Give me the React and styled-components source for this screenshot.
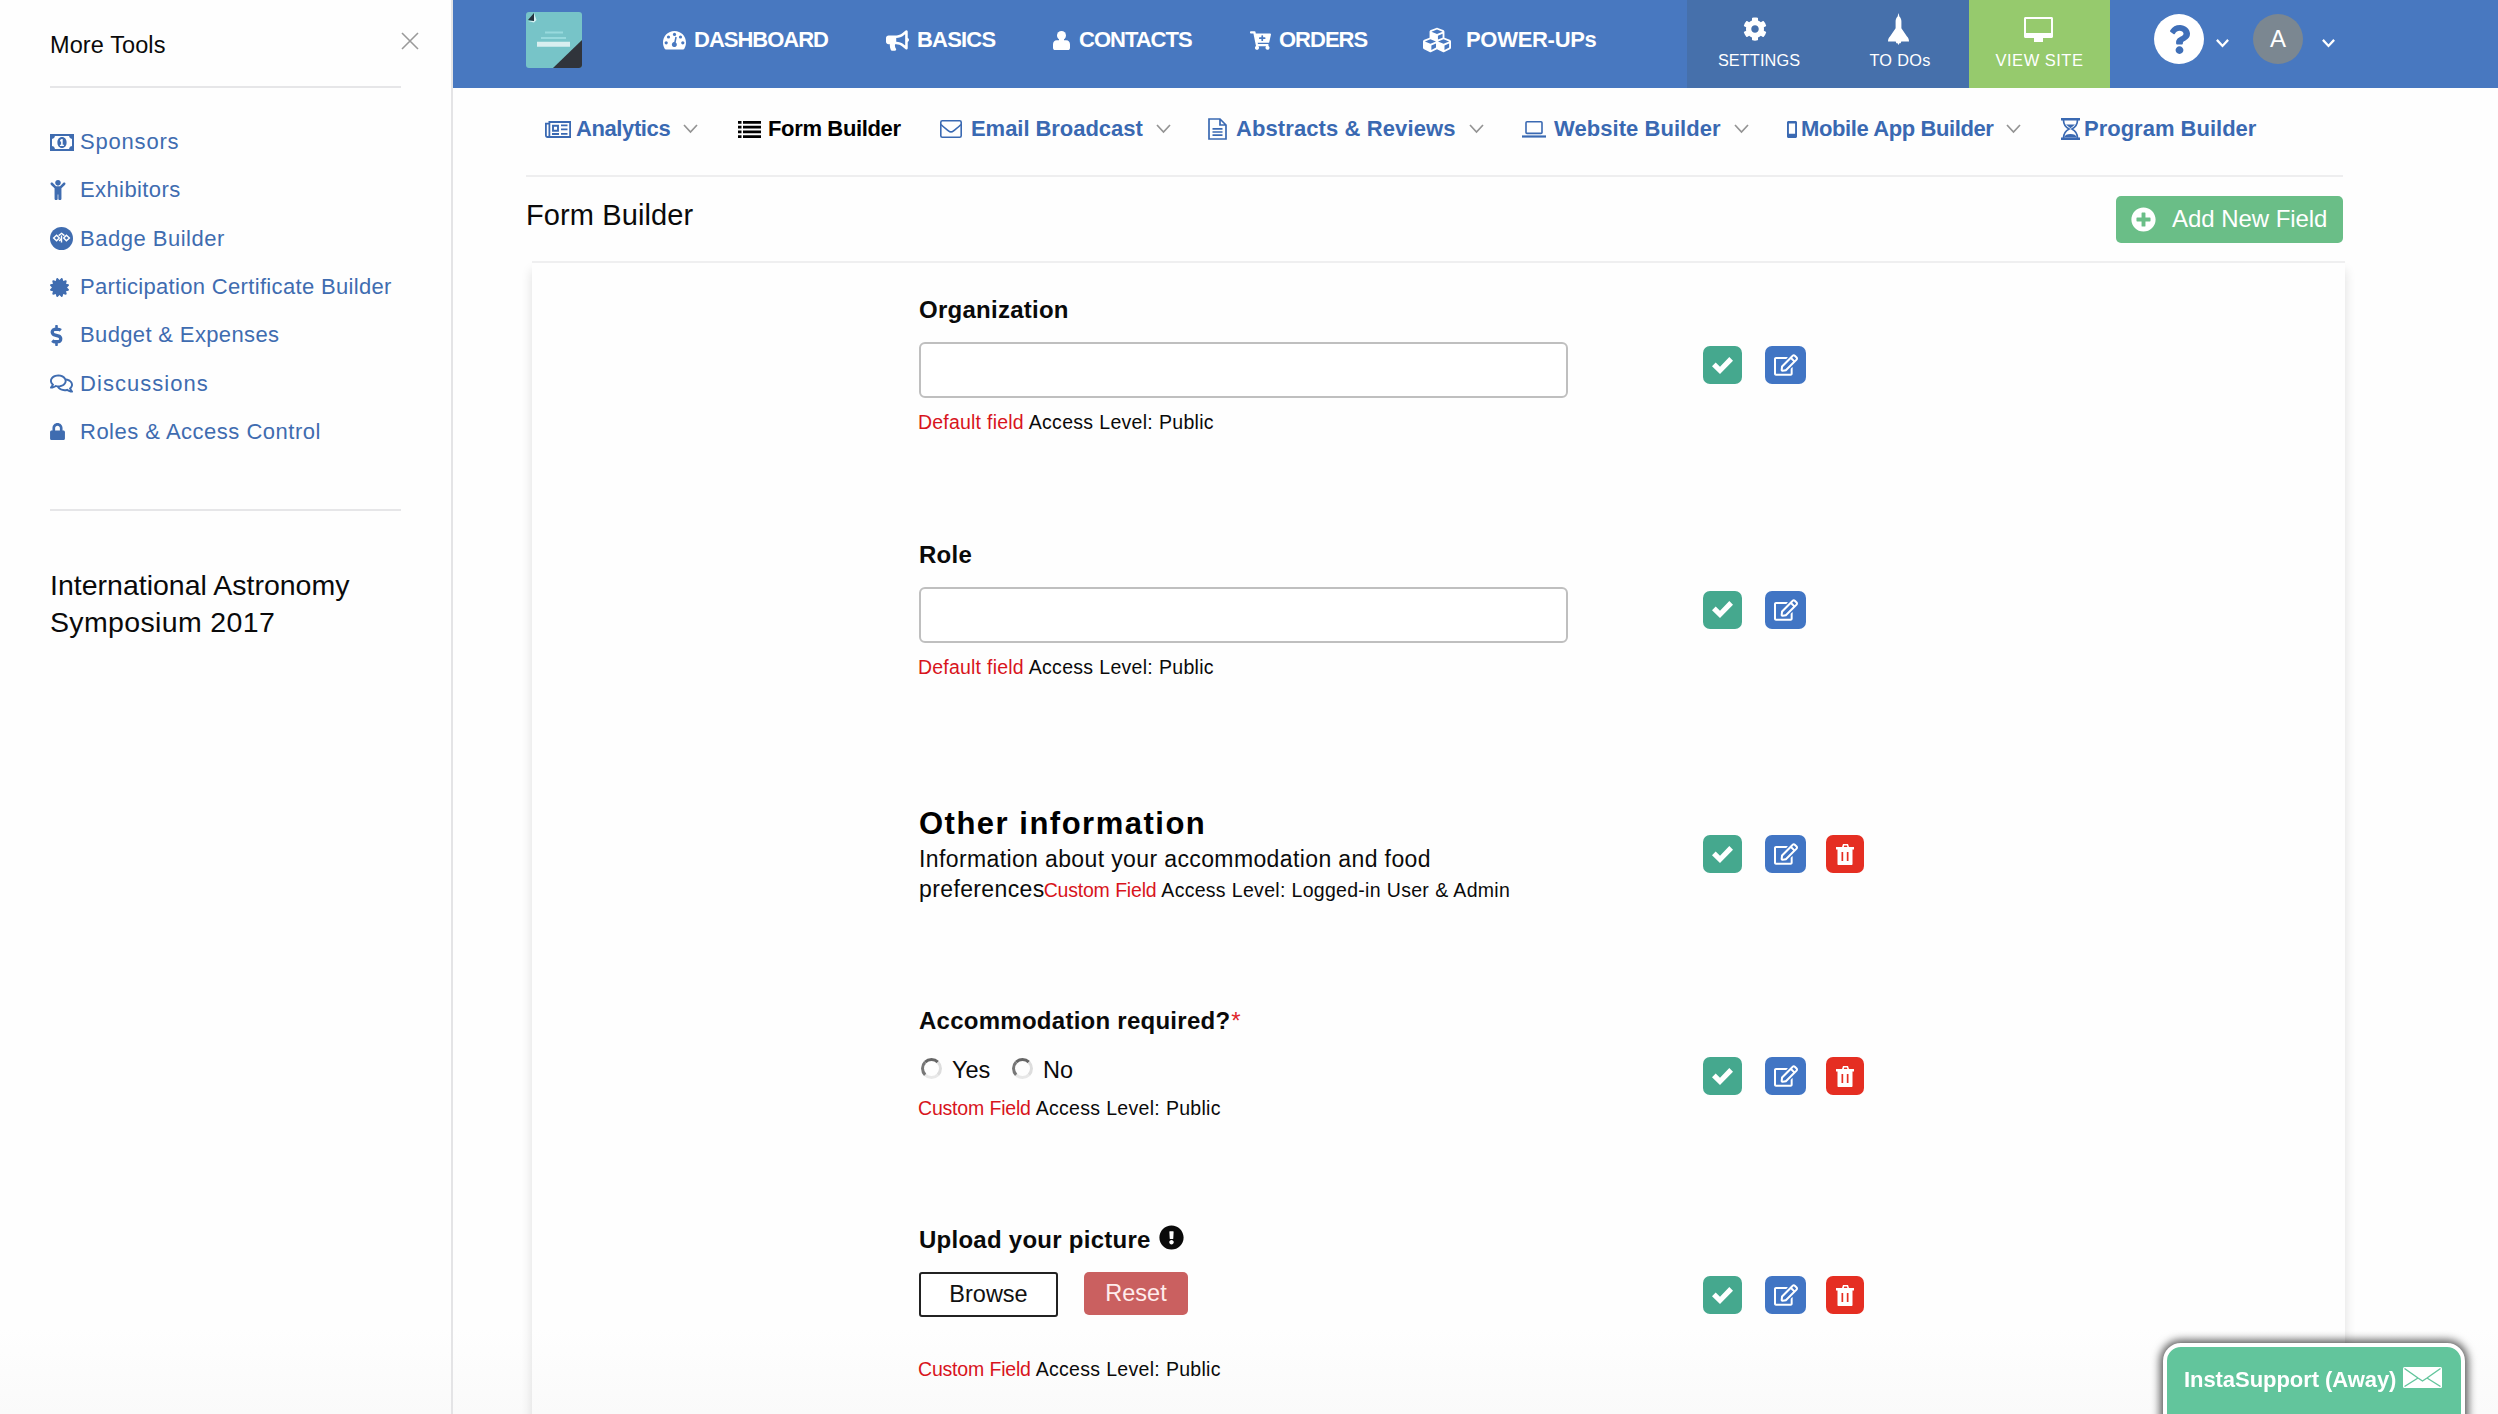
import React from 'react';
import styled, { createGlobalStyle } from 'styled-components';
import {
  FaChild, FaCertificate, FaDollarSign, FaRegComments, FaLock, FaBullhorn, FaCartPlus, FaCubes,
  FaCog, FaQuestion, FaPlusCircle, FaRegEdit, FaExclamationCircle,
} from 'react-icons/fa';

const MoneyIcon = () => (
  <svg width="24" height="17" viewBox="0 0 24 17" fill="currentColor">
    <path fillRule="evenodd" d="M0 0h24v17H0zM5 2Q4.600 4.800 2 5v7q2.600.2 3 3h14q.4-2.800 3-3V5q-2.600-.2-3-3z" />
    <path fillRule="evenodd" d="M12 3c2.900 0 4.600 2.400 4.600 5.500S14.900 14 12 14s-4.600-2.400-4.600-5.500S9.100 3 12 3zm-1.900 3.100v1.300h1v3.300h-1.200V12h4v-1.300h-1.200V5h-1.200z" />
  </svg>
);

const BadgeIcon = () => (
  <svg width="23" height="23" viewBox="0 0 23 23">
    <circle cx="11.500" cy="11.500" r="11.500" fill="currentColor" />
    <path d="M3.600 11l3-2.700 2.700 2.700-2.700 2.700zM8.700 8.600l2.900-2.300 2.800 2.300M19.400 11l-3-2.700-2.700 2.700 2.700 2.700zM11.500 8.500v7M9.200 14l2.300-2.500" fill="none" stroke="#fff" strokeWidth="1.400" />
  </svg>
);

const GaugeIcon = () => (
  <svg width="23" height="19" viewBox="0 0 23 19">
    <path fill="currentColor" d="M11.500 0C17.900 0 23 5.100 23 11.500c0 2.300-.6 4.400-1.700 6.200-.3.500-.7.700-1.200.7H2.900c-.5 0-.9-.2-1.200-.7C.6 15.900 0 13.800 0 11.500 0 5.100 5.100 0 11.500 0z" />
    <g fill="#4878c0">
      <circle cx="11.500" cy="3.400" r="1.600" />
      <circle cx="5.500" cy="6" r="1.600" />
      <circle cx="17.500" cy="6" r="1.600" />
      <circle cx="3.200" cy="11.800" r="1.600" />
      <circle cx="19.800" cy="11.800" r="1.600" />
      <path d="M12.300 5.800l1.500.4-1.100 5.300a2.500 2.500 0 1 1-1.500-.4z" />
    </g>
  </svg>
);

const PersonIcon = () => (
  <svg width="17" height="19" viewBox="0 0 17 19" fill="currentColor">
    <circle cx="8.500" cy="4.500" r="4.500" />
    <path d="M6 7h5v2.200h2.200c2.400 0 3.800 1.700 3.800 4.300v3.200c0 1.500-.8 2.300-2.200 2.300H2.200C.8 19 0 18.200 0 16.700v-3.200c0-2.600 1.400-4.300 3.800-4.300H6z" />
  </svg>
);

const ShuttleIcon = () => (
  <svg width="21" height="32" viewBox="0 0 21 32" fill="currentColor">
    <path d="M10.500 0l.9 3.500c1.300 1.400 2 3 2 5v6.800l5.600 8.200c1.400 1.400 2 3 2 5h-7.700l-.7 1.800h-1.200L10.500 32l-.9-1.700H8.400l-.7-1.800H0c0-2 .6-3.600 2-5l5.600-8.200V8.500c0-2 .7-3.600 2-5z" />
  </svg>
);

const NewsIcon = () => (
  <svg width="26" height="17" viewBox="0 0 26 17" fill="none" stroke="currentColor" strokeWidth="1.800">
    <path d="M4.400 1h20.700v15H2.500c-1 0-1.600-.7-1.600-1.700V2.600h3.500zM4.400 2.600v11.800c0 1-.8 1.600-1.600 1.600" />
    <path d="M8 4.800h5v5H8zM7 13h7M16 4.400h6.500M16 8.400h6.500M16 12.900h6.500" strokeWidth="1.900" />
  </svg>
);

const ListIcon = () => (
  <svg width="23" height="17" viewBox="0 0 23 17" fill="currentColor">
    <path d="M0 0h3.500v2.800H0zM0 4.700h3.500v2.800H0zM0 9.500h3.500v2.800H0zM0 14.200h3.500V17H0zM5 0h18v2.800H5zM5 4.700h18v2.800H5zM5 9.500h18v2.800H5zM5 14.200h18V17H5z" />
  </svg>
);

const EnvelopeIcon = () => (
  <svg width="22" height="18" viewBox="0 0 22 18" fill="none" stroke="currentColor" strokeWidth="1.600">
    <rect x=".8" y=".8" width="20.400" height="16.400" rx="1.500" />
    <path d="M1 4.500c2.500 2.600 5 4.200 7.500 6.300 1.600 1.400 3.400 1.400 5 0 2.500-2.100 5-3.700 7.500-6.300" />
  </svg>
);

const FileIcon = () => (
  <svg width="19" height="22" viewBox="0 0 19 22" fill="none" stroke="currentColor" strokeWidth="1.700">
    <path d="M1 1h11l6 6v14H1zM12 1v6h6" />
    <path d="M4.500 10.800h10M4.500 14h10M4.500 17.200h10" />
  </svg>
);

const LaptopIcon = () => (
  <svg width="24" height="17" viewBox="0 0 24 17" fill="none" stroke="currentColor" strokeWidth="1.600">
    <rect x="4" y=".8" width="16" height="11.600" rx="1" />
    <path d="M0 15.500h24" strokeWidth="2.200" />
  </svg>
);

const MobileIcon = () => (
  <svg width="10" height="17" viewBox="0 0 10 17" fill="currentColor">
    <path fillRule="evenodd" d="M1.500 0h7C9.400 0 10 .6 10 1.500v14c0 .9-.6 1.500-1.500 1.500h-7C.6 17 0 16.400 0 15.500v-14C0 .6.6 0 1.500 0zm.4 2.400v10.300h6.200V2.400z" />
  </svg>
);

const HourglassIcon = () => (
  <svg width="19" height="22" viewBox="0 0 19 22" fill="none" stroke="currentColor" strokeWidth="1.700">
    <path d="M0 1.200h19M0 20.800h19" strokeWidth="2.400" />
    <path d="M2.500 2c0 5 2 7 5.500 9-3.500 2-5.500 4-5.500 9M16.500 2c0 5-2 7-5.500 9 3.500 2 5.500 4 5.500 9" />
    <path d="M5 6.500h9l-4.500 3.800zM3 19.500c1-2.500 3-3.500 6.500-3.500s5.500 1 6.500 3.500z" fill="currentColor" stroke="none" />
  </svg>
);

const MonitorIcon = () => (
  <svg width="29" height="25" viewBox="0 0 29 25" fill="currentColor">
    <path fillRule="evenodd" d="M1.500 0h26c.9 0 1.500.6 1.500 1.500v18c0 .9-.6 1.500-1.500 1.500H19v4h-9v-4H1.500C.6 21 0 20.400 0 19.500v-18C0 .6.6 0 1.500 0zM2 2v14h25V2z" />
  </svg>
);

const CheckIcon = () => (
  <svg width="21" height="17" viewBox="0 0 21 17" fill="currentColor">
    <path d="M8 17L0 9.200l3.700-3.700L8 9.700 17.300 0 21 3.700z" />
  </svg>
);

const TrashIcon = () => (
  <svg width="18" height="21" viewBox="0 0 18 21" fill="currentColor">
    <path fillRule="evenodd" d="M6 3l1-3h5l1 3h5v2.500h-1.500V20c0 .6-.4 1-1 1h-13c-.6 0-1-.4-1-1V5.500H0V3zm1.800 0h3.600l-.5-1.500H8.200zM5.500 8v9H7.200V8zm5.300 0v9h1.700V8z" />
  </svg>
);

const MailIcon = () => (
  <svg width="39" height="21" viewBox="0 0 39 21">
    <rect width="39" height="21" rx="1.500" fill="#fff" />
    <path d="M1.500 1.500l13.500 9.500 4.500 3 4.500-3L37.500 1.500M1.500 19.500L15 11M37.500 19.500L24 11" fill="none" stroke="#62c59c" strokeWidth="1.400" />
  </svg>
);

const ChevronIcon = ({ size = 15, weight = 1.7 }) => (
  <svg width={size} height={size * 0.62} viewBox="0 0 15 9.300" fill="none" stroke="currentColor" strokeWidth={weight}>
    <path d="M1 1l6.500 7L14 1" />
  </svg>
);

const CloseIcon = () => (
  <svg width="18" height="18" viewBox="0 0 18 18" fill="none" stroke="currentColor" strokeWidth="1.600">
    <path d="M1 1l16 16M17 1L1 17" />
  </svg>
);

const LogoIcon = () => (
  <svg width="56" height="56" viewBox="0 0 56 56">
    <rect width="56" height="56" rx="3" fill="#77c4c8" />
    <path d="M56 28v25a3 3 0 0 1-3 3H27z" fill="#30343b" />
    <path d="M2 8l6-7v8z" fill="#26323f" />
    <path d="M8 1v8H2l6 1.500L10.500 8z" fill="#d4f0f2" />
    <path d="M19 20.500h18M15 26h25" stroke="#98dadd" strokeWidth="2" />
    <path d="M11 32.300h33" stroke="#d9eff0" strokeWidth="5" />
  </svg>
);

const tools = [
  { name: 'Sponsors', icon: <MoneyIcon />, track: 0.8 },
  { name: 'Exhibitors', icon: <FaChild size={20} />, track: 0.4, pull: 2 },
  { name: 'Badge Builder', icon: <BadgeIcon />, track: 0.5 },
  { name: 'Participation Certificate Builder', icon: <FaCertificate size={19} />, track: 0.33 },
  { name: 'Budget & Expenses', icon: <FaDollarSign size={21} />, track: 0.36, pull: 4 },
  { name: 'Discussions', icon: <FaRegComments size={23} />, track: 1.05 },
  { name: 'Roles & Access Control', icon: <FaLock size={17} />, track: 0.5, pull: 1 },
];

const mainNav = [
  { name: 'DASHBOARD', icon: <GaugeIcon />, slot: 31, width: 223, track: -1 },
  { name: 'BASICS', icon: <FaBullhorn size={23} />, slot: 31, width: 167, track: -0.8 },
  { name: 'CONTACTS', icon: <PersonIcon />, slot: 26, width: 197, track: -1 },
  { name: 'ORDERS', icon: <FaCartPlus size={21} />, slot: 29, width: 173, track: -1 },
  { name: 'POWER-UPs', icon: <FaCubes size={28} />, slot: 43, width: 264, track: -0.3 },
];

const subNav = [
  { name: 'Analytics', icon: <NewsIcon />, slot: 31, width: 193, track: -0.4, menu: true },
  { name: 'Form Builder', icon: <ListIcon />, slot: 30, width: 202, track: -0.35, active: true },
  { name: 'Email Broadcast', icon: <EnvelopeIcon />, slot: 31, width: 268, track: -0.05, menu: true },
  { name: 'Abstracts & Reviews', icon: <FileIcon />, slot: 28, width: 314, track: 0.1, menu: true },
  { name: 'Website Builder', icon: <LaptopIcon />, slot: 32, width: 265, track: 0.05, menu: true },
  { name: 'Mobile App Builder', icon: <MobileIcon />, slot: 14, width: 274, track: -0.4, menu: true },
  { name: 'Program Builder', icon: <HourglassIcon />, slot: 23, width: 200, track: 0 },
];

const Access = ({ custom, level = 'Public', top }) => (
  <Help $top={top}>
    <Kind $custom={custom}>{custom ? 'Custom Field' : 'Default field'}</Kind> Access Level: {level}
  </Help>
);

const FieldRow = ({ height, removable, children }) => (
  <Row $height={height}>
    <Field>{children}</Field>
    <Actions>
      <Action $width="39px" $color="#45a88e"><CheckIcon /></Action>
      <Action $width="41px" $color="#4175c4"><FaRegEdit size={24} /></Action>
      {removable && <Action $width="38px" $color="#e52e22"><TrashIcon /></Action>}
    </Actions>
  </Row>
);

function App() {
  return (
    <Page>
      <GlobalStyle />
      <Sidebar>
        <SideHead>
          More Tools
          <Close><CloseIcon /></Close>
        </SideHead>
        <ToolList>
          {tools.map((tool) => (
            <Tool key={tool.name} $track={tool.track}>
              <Slot $width={30} $pull={tool.pull}>{tool.icon}</Slot>
              {tool.name}
            </Tool>
          ))}
        </ToolList>
        <EventName>International Astronomy<br /><EventYear>Symposium 2017</EventYear></EventName>
      </Sidebar>

      <Main>
        <Header>
          <Logo><LogoIcon /></Logo>
          <Nav>
            {mainNav.map((item) => (
              <NavItem key={item.name} $width={item.width} $track={item.track}>
                <Slot $width={item.slot}>{item.icon}</Slot>
                {item.name}
              </NavItem>
            ))}
          </Nav>
          <Tile $width={138} $track={0.1}>
            <TileIcon $shift={-8}><FaCog size={24} /></TileIcon>
            SETTINGS
          </Tile>
          <Tile $width={144} $track={0.3}>
            <TileIcon $shift={-4}><ShuttleIcon /></TileIcon>
            TO DOs
          </Tile>
          <Tile $width={141} $track={0.5} $green>
            <TileIcon $shift={-3}><MonitorIcon /></TileIcon>
            VIEW SITE
          </Tile>
          <Account>
            <Round><FaQuestion size={29} /></Round>
            <Caret $left={12}><ChevronIcon size={13} weight={2.6} /></Caret>
            <Round $user>A</Round>
            <Caret $left={19}><ChevronIcon size={13} weight={2.6} /></Caret>
          </Account>
        </Header>

        <Content>
          <SubNav>
            {subNav.map((item) => (
              <SubItem key={item.name} $width={item.width} $track={item.track} $active={item.active}>
                <Slot $width={item.slot}>{item.icon}</Slot>
                {item.name}
                {item.menu && <SubCaret><ChevronIcon /></SubCaret>}
              </SubItem>
            ))}
          </SubNav>
          <TitleBar>
            <Title>Form Builder</Title>
            <AddButton><FaPlusCircle size={25} />Add New Field</AddButton>
          </TitleBar>

          <Panel>
            <FieldRow height={244.7}>
              <Label>Organization</Label>
              <Input />
              <Access top={11} />
            </FieldRow>
            <FieldRow height={244.7}>
              <Label>Role</Label>
              <Input />
              <Access top={11} />
            </FieldRow>
            <FieldRow height={222} removable>
              <Section>Other information</Section>
              <Info>
                Information about your accommodation and food<br />
                preferences<Access custom level="Logged-in User & Admin" />
              </Info>
            </FieldRow>
            <FieldRow height={219} removable>
              <Label>Accommodation required?<Star>*</Star></Label>
              <Options>
                <Option><Radio />Yes</Option>
                <Option><Radio />No</Option>
              </Options>
              <Access custom top={10} />
            </FieldRow>
            <FieldRow height={220} removable>
              <Label>Upload your picture<FaExclamationCircle size={25} /></Label>
              <Uploads>
                <Browse>Browse</Browse>
                <Reset>Reset</Reset>
              </Uploads>
              <Access custom top={39} />
            </FieldRow>
          </Panel>
        </Content>
      </Main>
      <Support>InstaSupport (Away) <MailIcon /></Support>
    </Page>
  );
}

const GlobalStyle = createGlobalStyle`
  * {
    box-sizing: border-box;
  }
  body {
    margin: 0;
    background: #fefefe;
    color: #0a0a0a;
    font-family: "Liberation Sans", Arial, sans-serif;
    overflow: hidden;
  }
  svg {
    display: block;
    flex: none;
  }
`

const Page = styled.div`
  display: flex;
  height: 1414px;
  overflow: hidden;
  background: linear-gradient(#fefefe 94%, #fafafa);
`

const Sidebar = styled.aside`
  width: 453px;
  flex: none;
  padding: 0 50px;
  border-right: 2px solid #e4e4e6;
`

const SideHead = styled.div`
  display: flex;
  justify-content: space-between;
  height: 88px;
  padding-top: 30px;
  line-height: 30px;
  border-bottom: 2px solid #e6e6e8;
  font-size: 23.500px;
  letter-spacing: 0.100px;
  white-space: nowrap;
`

const Close = styled.span`
  color: #9a9a9a;
  margin: 2px -18px 0 0;
`

const ToolList = styled.nav`
  height: 423px;
  padding-top: 30px;
  border-bottom: 2px solid #e6e6e8;
`

const Tool = styled.a`
  display: flex;
  align-items: center;
  height: 48.300px;
  color: #3f6cb0;
  font-size: 22px;
  letter-spacing: ${props => props.$track}px;
  white-space: nowrap;
`

const Slot = styled.span`
  width: ${props => props.$width + (props.$pull || 0)}px;
  margin-left: -${props => props.$pull || 0}px;
  flex: none;
`

const EventName = styled.h2`
  margin: 56px 0 0;
  font-size: 28.500px;
  line-height: 37px;
  font-weight: 400;
  white-space: nowrap;
`

const EventYear = styled.span`
  letter-spacing: 0.350px;
`

const Main = styled.main`
  flex: 1;
  min-width: 0;
`

const Header = styled.header`
  display: flex;
  height: 88px;
  background: #4878c0;
  color: white;
`

const Logo = styled.div`
  width: 210px;
  padding: 12px 0 0 73px;
`

const Nav = styled.nav`
  display: flex;
  height: 80px;
`

const NavItem = styled.a`
  display: flex;
  align-items: center;
  width: ${props => props.$width}px;
  font-size: 22px;
  font-weight: 700;
  letter-spacing: ${props => props.$track}px;
  white-space: nowrap;
`

const Tile = styled.a`
  display: flex;
  flex-direction: column;
  align-items: center;
  width: ${props => props.$width}px;
  padding-left: ${props => props.$green ? 0 : 6}px;
  background: ${props => props.$green ? "#96ca6d" : "#4670ab"};
  font-size: ${props => props.$green ? 16.500 : 16.300}px;
  line-height: 20px;
  letter-spacing: ${props => props.$track}px;
`

const TileIcon = styled.div`
  display: flex;
  align-items: center;
  height: 50px;
  padding-top: 8px;
  margin-left: ${props => props.$shift}px;
`

const Account = styled.div`
  display: flex;
  align-items: center;
  height: 78px;
  padding-left: 44px;
`

const Round = styled.div`
  display: flex;
  align-items: center;
  justify-content: center;
  width: 50px;
  height: 50px;
  border-radius: 50%;
  font-size: 24px;
  color: ${props => props.$user ? "white" : "#3f6fb8"};
  background: ${props => props.$user ? "#7b8791" : "white"};
`

const Caret = styled.span`
  width: ${props => props.$left + 37}px;
  padding: 9px 0 0 ${props => props.$left}px;
`

const Content = styled.div`
  width: 1817px;
  margin-left: 73px;
`

const SubNav = styled.nav`
  display: flex;
  height: 89px;
  padding: 0 0 5px 19px;
  border-bottom: 2px solid #eeeeef;
`

const SubItem = styled.a`
  display: flex;
  align-items: center;
  flex: none;
  width: ${props => props.$width}px;
  color: ${props => props.$active ? "#000" : "#3a69b2"};
  font-size: 22px;
  font-weight: 700;
  letter-spacing: ${props => props.$track}px;
  white-space: nowrap;
`

const SubCaret = styled.span`
  margin-left: 13px;
  color: #949494;
`

const TitleBar = styled.div`
  display: flex;
  align-items: center;
  justify-content: space-between;
  height: 84px;
`

const Title = styled.h1`
  margin: 0 0 7px;
  font-size: 29px;
  font-weight: 400;
  letter-spacing: 0.100px;
`

const AddButton = styled.button`
  display: flex;
  align-items: center;
  gap: 16px;
  width: 227px;
  height: 47px;
  padding: 0 15px;
  border: 0;
  border-radius: 5px;
  background: #6abe87;
  color: white;
  font-family: inherit;
  font-size: 24px;
  letter-spacing: -0.050px;
  white-space: nowrap;
`

const Panel = styled.section`
  width: 1813px;
  height: 1200px;
  margin-left: 6px;
  padding: 32px 0 0 387px;
  border-top: 2px solid #efeff0;
  box-shadow: 0 10px 10px 1px rgba(0, 0, 0, 0.110);
`

const Row = styled.div`
  display: flex;
  height: ${props => props.$height}px;
`

const Field = styled.div`
  width: 649px;
  margin-right: 135px;
`

const Label = styled.div`
  display: flex;
  gap: 8px;
  font-size: 24px;
  line-height: 30px;
  font-weight: 700;
  letter-spacing: 0.260px;
  white-space: nowrap;
`

const Star = styled.span`
  margin-left: -7px;
  color: #e0262b;
  font-weight: 400;
`

const Input = styled.input`
  display: block;
  width: 649px;
  height: 56px;
  margin-top: 17px;
  border: 2px solid #bfbfbf;
  border-radius: 6px;
  background: white;
`

const Help = styled.span`
  display: ${props => props.$top ? "block" : "inline"};
  margin-top: ${props => props.$top || 0}px;
  margin-left: -1px;
  font-size: 19.500px;
  line-height: 26px;
  letter-spacing: 0.280px;
  word-spacing: 0.300px;
`

const Kind = styled.span`
  color: #d8141c;
  letter-spacing: ${props => props.$custom ? -0.200 : 0.200}px;
`

const Section = styled.h3`
  margin: 0;
  padding-top: 25px;
  font-size: 31px;
  line-height: 30px;
  letter-spacing: 1.500px;
  color: #000;
`

const Info = styled.div`
  margin-top: 5px;
  font-size: 23px;
  line-height: 30px;
  letter-spacing: 0.380px;
  white-space: nowrap;
`

const Options = styled.div`
  display: flex;
  height: 30px;
  margin-top: 19px;
`

const Option = styled.label`
  display: flex;
  align-items: center;
  width: 91px;
  font-size: 23.500px;
`

const Radio = styled.span`
  width: 21px;
  height: 21px;
  margin: 0 10px 3px 2px;
  border: 3px solid;
  border-color: #666 #ddd #e8e8e8 #777;
  border-radius: 50%;
`

const Uploads = styled.div`
  display: flex;
  gap: 26px;
  height: 45px;
  margin-top: 17px;
`

const Browse = styled.button`
  width: 139px;
  height: 45px;
  border: 2px solid #222;
  border-radius: 3px;
  background: white;
  color: #111;
  font-family: inherit;
  font-size: 23.500px;
`

const Reset = styled.button`
  width: 104px;
  height: 43px;
  border: 0;
  border-radius: 5px;
  background: #ca6060;
  color: #ffecec;
  font-family: inherit;
  font-size: 23.500px;
`

const Actions = styled.div`
  display: grid;
  grid-template-columns: 39px 41px 38px;
  column-gap: 20px;
  align-items: start;
  padding-top: 51px;

  > :nth-child(2) {
    margin-left: 3px;
  }
`

const Action = styled.button`
  display: flex;
  align-items: center;
  justify-content: center;
  width: ${props => props.$width};
  height: 38px;
  padding: 0;
  border: 0;
  border-radius: 7px;
  background: ${props => props.$color};
  color: white;

  &:last-child:nth-child(3) {
    margin-left: 3px;
  }
`

const Support = styled.div`
  position: fixed;
  right: 33px;
  bottom: -20px;
  display: flex;
  gap: 7px;
  width: 302px;
  height: 91px;
  padding: 20px 0 0 17px;
  border: 4px solid white;
  border-radius: 18px 18px 0 0;
  background: #62c59c;
  box-shadow: 0 0 8px 3px rgba(0, 0, 0, 0.650);
  color: white;
  font-size: 22px;
  line-height: 26px;
  font-weight: 700;
  letter-spacing: -0.060px;
  white-space: nowrap;
`

export default App;
